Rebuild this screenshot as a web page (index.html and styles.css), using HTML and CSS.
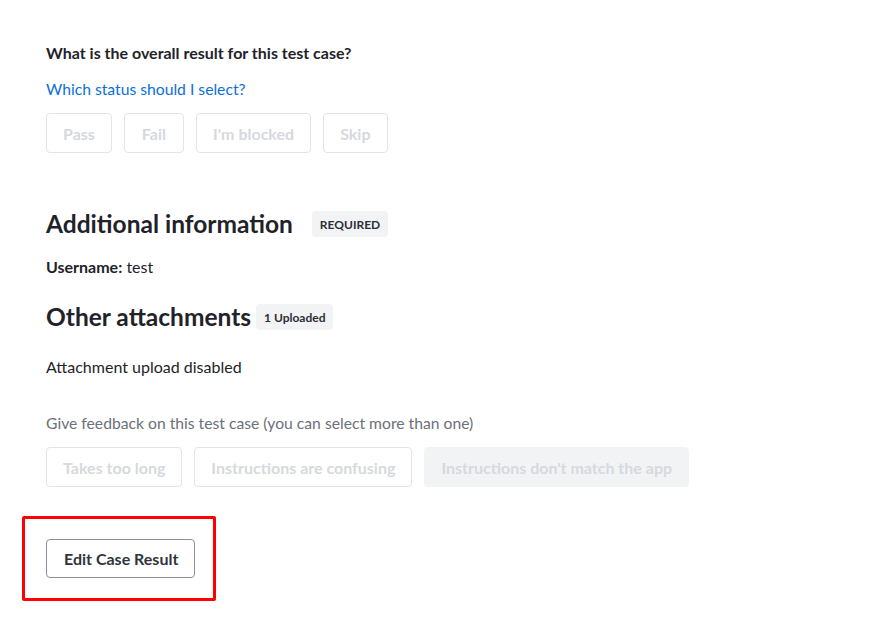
FILE: index.html
```html
<!DOCTYPE html>
<html>
  <head>
    <title>Test case result</title>
    <link rel="stylesheet" href="styles.css">
  </head>
  <body>
    <div class="page">
      <section class="result">
        <h3 class="question">What is the overall result for this test case?</h3>
        <a class="help-link" href="#">Which status should I select?</a>
        <div class="choices">
          <button class="choice" disabled>Pass</button>
          <button class="choice wide" disabled>Fail</button>
          <button class="choice" disabled>I'm blocked</button>
          <button class="choice" disabled>Skip</button>
        </div>
      </section>

      <section class="info">
        <div class="heading-row">
          <h2>Additional information</h2>
          <span class="badge">REQUIRED</span>
        </div>
        <p class="field"><b>Username:</b> test</p>

        <div class="heading-row tight">
          <h2>Other attachments</h2>
          <span class="badge">1 Uploaded</span>
        </div>
        <p class="note">Attachment upload disabled</p>
      </section>

      <section class="feedback">
        <p class="hint">Give feedback on this test case (you can select more than one)</p>
        <div class="choices">
          <button class="choice" disabled>Takes too long</button>
          <button class="choice" disabled>Instructions are confusing</button>
          <button class="choice filled" disabled>Instructions don't match the app</button>
        </div>
      </section>

      <div class="highlight">
        <button class="edit-btn">Edit Case Result</button>
      </div>
    </div>
  </body>
</html>
```

FILE: styles.css
```css
body {
  margin: 0;
  font-family: Lato, "Liberation Sans", sans-serif;
  font-size: 16px;
  color: #1f2329;
  background-color: #ffffff;
}

.page {
  padding: 44px 46px 0 46px;
}

.question {
  margin: 0;
  font-size: 16px;
  font-weight: bold;
  line-height: 18px;
}

.help-link {
  display: block;
  margin-top: 18px;
  font-size: 15.7px;
  line-height: 18px;
  color: #0b6fd8;
  text-decoration: none;
}

.choices {
  display: flex;
  gap: 12px;
  margin-top: 15px;
}

.choice {
  height: 40px;
  padding: 0 16px;
  font-family: Lato, "Liberation Sans", sans-serif;
  font-size: 16px;
  font-weight: bold;
  color: #d6d9dd;
  background-color: #ffffff;
  border: 1px solid #e2e4e7;
  border-radius: 4px;
}

.choice.wide {
  padding: 0 17px;
}

.choice.filled {
  background-color: #f2f3f5;
  border-color: #f2f3f5;
}

.info {
  margin-top: 58px;
}

.heading-row {
  display: flex;
  align-items: center;
  gap: 19px;
  height: 26px;
}

.heading-row.tight {
  gap: 5px;
  margin-top: 28px;
}

.heading-row h2 {
  margin: 0;
  font-size: 24.5px;
  font-weight: bold;
  line-height: 26px;
}

.badge {
  display: inline-flex;
  align-items: center;
  height: 26px;
  padding: 0 8px;
  font-size: 12px;
  font-weight: bold;
  color: #2b2f36;
  background-color: #f2f3f5;
  border-radius: 4px;
}

.field {
  margin: 21px 0 0 0;
  line-height: 18px;
}

.note {
  margin: 28px 0 0 0;
  line-height: 18px;
}

.feedback {
  margin-top: 38px;
}

.hint {
  margin: 0;
  font-size: 15.7px;
  line-height: 18px;
  color: #6b7079;
}

.feedback .choices {
  margin-top: 15px;
}

.highlight {
  display: inline-block;
  margin: 29px 0 0 -24px;
  padding: 20px 18px 20px 21px;
  border: 3px solid #ff0000;
  border-radius: 2px;
}

.edit-btn {
  display: block;
  height: 39px;
  padding: 0 16px 0 17px;
  font-family: Lato, "Liberation Sans", sans-serif;
  font-size: 16px;
  font-weight: bold;
  color: #2f343b;
  background-color: #ffffff;
  border: 1px solid #8c9098;
  border-radius: 4px;
}
```
